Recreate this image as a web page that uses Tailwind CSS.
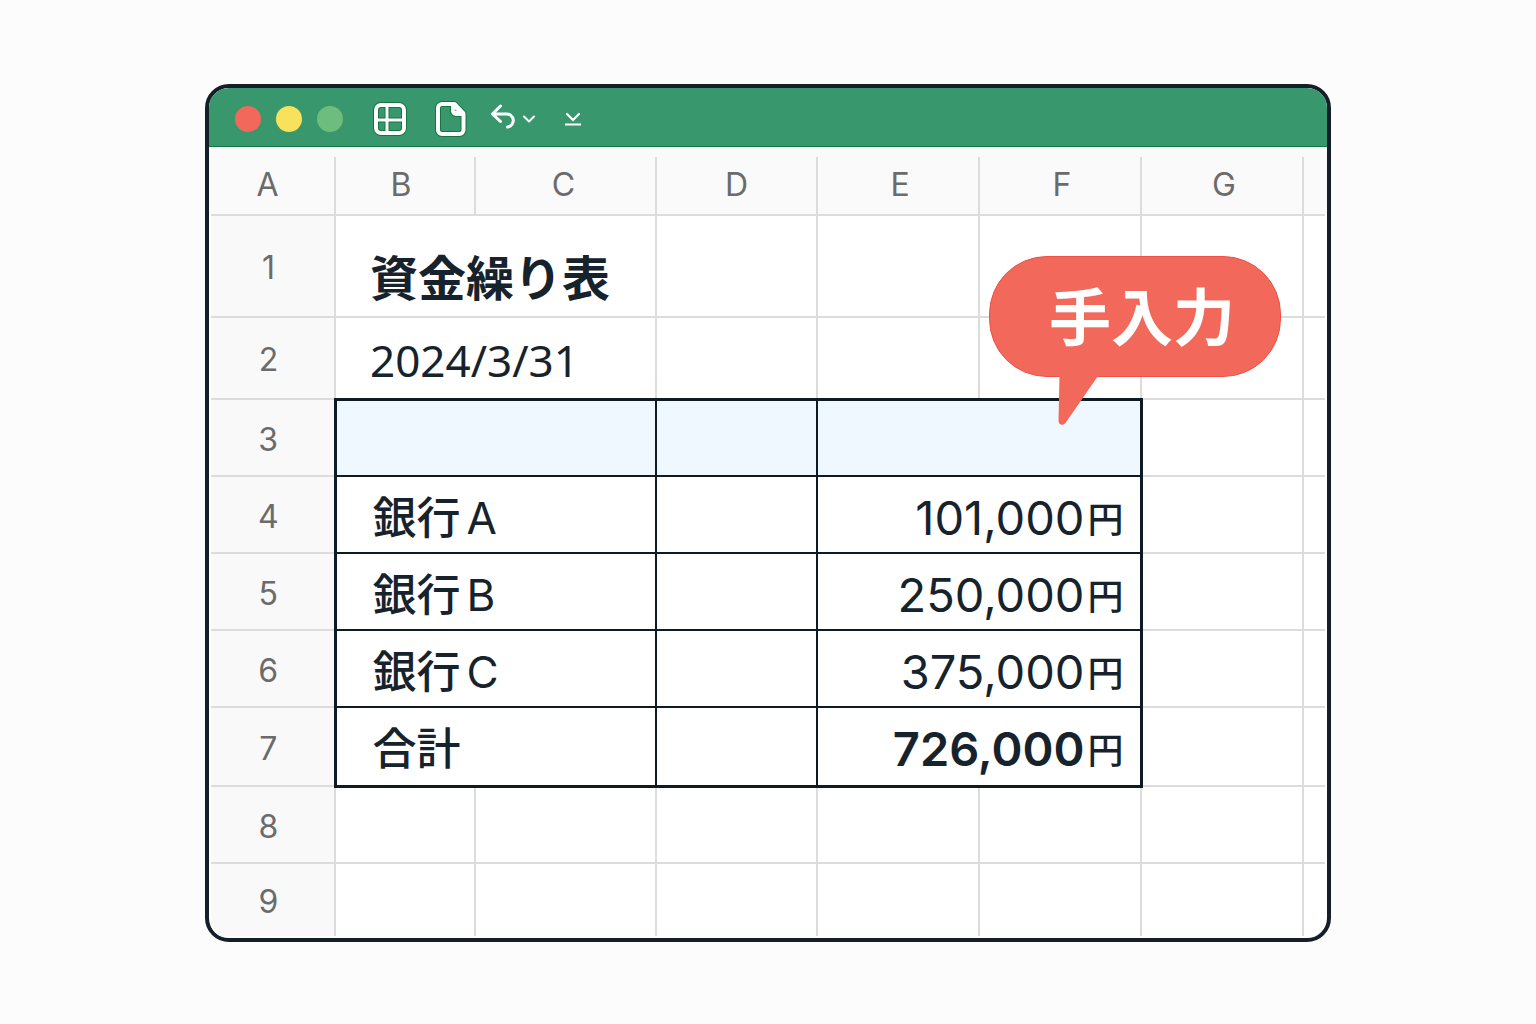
<!DOCTYPE html>
<html lang="ja">
<head>
    <meta charset="UTF-8">
    <meta name="viewport" content="width=device-width, initial-scale=1.0">
    <title>資金繰り表</title>
    <script src="https://cdn.jsdelivr.net/npm/@tailwindcss/browser@4"></script>
</head>
<body class="bg-[#fcfcfc] min-h-screen pt-[2px] flex items-center justify-center font-['Inter','Noto_Sans_CJK_JP',sans-serif] text-[#17232c]">
    <main class="relative w-full max-w-[1126px] border-4 border-[#141f29] rounded-3xl bg-white">
        <!-- Title bar -->
        <header class="h-[59px] flex items-center pt-[3px] pl-[26px] bg-[#39976e] border-b border-[#0f7a43] rounded-t-[20px]">
            <div class="flex gap-[15px]">
                <span class="size-[26px] rounded-full bg-[#f2695c]"></span>
                <span class="size-[26px] rounded-full bg-[#f8e25c]"></span>
                <span class="size-[26px] rounded-full bg-[#6cbd7e]"></span>
            </div>
            <button type="button" aria-label="表" class="ml-[30px]">
                <svg class="block" width="34" height="34" viewBox="0 0 34 34" fill="none">
                    <rect x="3" y="3" width="28" height="28" rx="5" stroke="#13753f" stroke-width="6"/>
                    <path d="M14 4v26M4 18h26" stroke="#13753f" stroke-width="5"/>
                    <rect x="3" y="3" width="28" height="28" rx="5" stroke="#fff" stroke-width="4"/>
                    <path d="M14 4v26M4 18h26" stroke="#fff" stroke-width="3"/>
                </svg>
            </button>
            <button type="button" aria-label="新規" class="ml-7">
                <svg class="block" width="32" height="36" viewBox="0 0 32 36" fill="none" stroke-linejoin="round">
                    <path d="M7 3h12.500l9 9.500v16.500a4 4 0 0 1-4 4H7a4 4 0 0 1-4-4V7a4 4 0 0 1 4-4z" stroke="#13753f" stroke-width="6"/>
                    <path d="M7 3h12.500l9 9.500v16.500a4 4 0 0 1-4 4H7a4 4 0 0 1-4-4V7a4 4 0 0 1 4-4z" stroke="#fff" stroke-width="4"/>
                    <path d="M17 4v6a4 4 0 0 0 4 4h7l-8-9z" fill="#fff" stroke="#fff" stroke-width="2"/>
                    <path d="M15.500 5v5.500a5 5 0 0 0 5 5H26" stroke="#13753f"/>
                    <path d="M19.500 8l2.500 2h-2z" fill="#5fa987"/>
                </svg>
            </button>
            <button type="button" aria-label="元に戻す" class="ml-[23px] mb-[3px]">
                <svg class="block" width="26" height="28" viewBox="0 0 26 28" fill="none" stroke="#fff" stroke-width="3" stroke-linecap="round" stroke-linejoin="round">
                    <path d="M10.500 3 2.500 11 10.500 18.500M3 11h13a6.500 6.500 0 0 1 1.500 13"/>
                </svg>
            </button>
            <button type="button" aria-label="履歴" class="ml-[7px]">
                <svg class="block" width="12" height="8" viewBox="0 0 12 8" fill="none" stroke="#fff" stroke-width="2" stroke-linecap="round" stroke-linejoin="round">
                    <path d="M1 1.500l5 5 5-5"/>
                </svg>
            </button>
            <button type="button" aria-label="その他" class="ml-[30px]">
                <svg class="block" width="16" height="14" viewBox="0 0 16 14" fill="none" stroke="#fff" stroke-width="2">
                    <path d="M2 2l6 6 6-6" stroke-width="2.200" stroke-linecap="round"/>
                    <path d="M0 12.500h16"/>
                </svg>
            </button>
        </header>

        <!-- Sheet -->
        <div class="pt-[10px] pb-[2px] px-[2px] rounded-b-[20px] overflow-hidden bg-[linear-gradient(#fafafa,#fafafa)] bg-[length:100%_68px] bg-no-repeat">
            <table class="w-full table-fixed border-collapse">
                <colgroup>
                    <col class="w-[124px]">
                    <col class="w-[140px]">
                    <col class="w-[181px]">
                    <col class="w-[161px]">
                    <col class="w-[162px]">
                    <col class="w-[162px]">
                    <col class="w-[162px]">
                    <col>
                </colgroup>
                <thead class="text-[32px] leading-10 text-[#6b6b6b]">
                    <tr class="h-[58px] bg-[#fafafa] *:border-b-2 *:border-[#dcdcdc] *:font-normal *:p-0 *:pb-[2px]">
                        <th scope="col" class="border-r-2"><span class="mr-[10px]">A</span></th>
                        <th scope="col" class="border-r-2"><span class="mr-2">B</span></th>
                        <th scope="col" class="border-r-2"><span class="mr-1">C</span></th>
                        <th scope="col" class="border-r-2">D</th>
                        <th scope="col" class="border-r-2"><span class="ml-1">E</span></th>
                        <th scope="col" class="border-r-2"><span class="ml-1">F</span></th>
                        <th scope="col" class="border-r-2"><span class="ml-1">G</span></th>
                        <td></td>
                    </tr>
                </thead>
                <tbody class="[&_th]:bg-[#f9f9f9] [&_th]:text-[32px] [&_th]:leading-10 [&_th]:font-normal [&_th]:text-[#6b6b6b] [&_th]:p-0 [&_th]:pt-1 [&_th]:pr-2">
                    <tr class="h-[102px] *:border-b-2 *:border-r-2 *:border-[#dcdcdc]">
                        <th scope="row">1</th>
                        <td colspan="2" class="pl-[34px] pt-[26px] text-[48px] leading-[56px] font-bold whitespace-nowrap">資金繰り表</td>
                        <td></td>
                        <td></td>
                        <td></td>
                        <td></td>
                        <td class="border-r-0!"></td>
                    </tr>
                    <tr class="h-[82px] *:border-b-2 *:border-r-2 *:border-[#dcdcdc]">
                        <th scope="row">2</th>
                        <td colspan="2" class="pl-[34px] pt-1 font-['Noto_Sans',sans-serif] text-[44px] leading-[56px] whitespace-nowrap">2024/3/31</td>
                        <td></td>
                        <td></td>
                        <td></td>
                        <td></td>
                        <td class="border-r-0!"></td>
                    </tr>
                    <tr class="h-[77px] *:border-b-2 *:border-r-2 *:border-[#dcdcdc]">
                        <th scope="row">3</th>
                        <td colspan="2" class="bg-[#f0f8ff] border-[#0e1a24]! border-l-3 border-t-3"></td>
                        <td class="bg-[#f0f8ff] border-[#0e1a24]! border-t-3"></td>
                        <td colspan="2" class="bg-[#f0f8ff] border-[#0e1a24]! border-t-3 border-r-3!"></td>
                        <td></td>
                        <td class="border-r-0!"></td>
                    </tr>
                    <tr class="h-[77px] *:border-b-2 *:border-r-2 *:border-[#dcdcdc]">
                        <th scope="row">4</th>
                        <td colspan="2" class="border-[#0e1a24]! border-l-3 pl-9 pt-[6px] text-[44px] leading-[56px] font-medium">銀行<span class="ml-[6px] font-normal">A</span></td>
                        <td class="border-[#0e1a24]!"></td>
                        <td colspan="2" class="border-[#0e1a24]! border-r-3! pr-4 pt-[6px] text-right text-[47px] leading-[56px] whitespace-nowrap">101,000<span class="ml-[3px] align-[2px] text-[36px] leading-10 font-medium">円</span></td>
                        <td></td>
                        <td class="border-r-0!"></td>
                    </tr>
                    <tr class="h-[77px] *:border-b-2 *:border-r-2 *:border-[#dcdcdc]">
                        <th scope="row">5</th>
                        <td colspan="2" class="border-[#0e1a24]! border-l-3 pl-9 pt-[6px] text-[44px] leading-[56px] font-medium">銀行<span class="ml-[6px] font-normal">B</span></td>
                        <td class="border-[#0e1a24]!"></td>
                        <td colspan="2" class="border-[#0e1a24]! border-r-3! pr-4 pt-[6px] text-right text-[47px] leading-[56px] whitespace-nowrap">250,000<span class="ml-[3px] align-[2px] text-[36px] leading-10 font-medium">円</span></td>
                        <td></td>
                        <td class="border-r-0!"></td>
                    </tr>
                    <tr class="h-[77px] *:border-b-2 *:border-r-2 *:border-[#dcdcdc]">
                        <th scope="row">6</th>
                        <td colspan="2" class="border-[#0e1a24]! border-l-3 pl-9 pt-[6px] text-[44px] leading-[56px] font-medium">銀行<span class="ml-[6px] font-normal">C</span></td>
                        <td class="border-[#0e1a24]!"></td>
                        <td colspan="2" class="border-[#0e1a24]! border-r-3! pr-4 pt-[6px] text-right text-[47px] leading-[56px] whitespace-nowrap">375,000<span class="ml-[3px] align-[2px] text-[36px] leading-10 font-medium">円</span></td>
                        <td></td>
                        <td class="border-r-0!"></td>
                    </tr>
                    <tr class="h-[79px] *:border-b-2 *:border-r-2 *:border-[#dcdcdc]">
                        <th scope="row">7</th>
                        <td colspan="2" class="border-[#0e1a24]! border-l-3 border-b-3! pl-9 pt-[6px] text-[44px] leading-[56px] font-medium">合計</td>
                        <td class="border-[#0e1a24]! border-b-3!"></td>
                        <td colspan="2" class="border-[#0e1a24]! border-r-3! border-b-3! pr-4 pt-[6px] text-right text-[47px] leading-[56px] font-semibold whitespace-nowrap">726,000<span class="ml-[3px] align-[2px] text-[36px] leading-10 font-medium">円</span></td>
                        <td></td>
                        <td class="border-r-0!"></td>
                    </tr>
                    <tr class="h-[77px] *:border-b-2 *:border-r-2 *:border-[#dcdcdc]">
                        <th scope="row">8</th>
                        <td></td>
                        <td></td>
                        <td></td>
                        <td></td>
                        <td></td>
                        <td></td>
                        <td class="border-r-0!"></td>
                    </tr>
                    <tr class="h-[73px] *:border-r-2 *:border-[#dcdcdc]">
                        <th scope="row">9</th>
                        <td></td>
                        <td></td>
                        <td></td>
                        <td></td>
                        <td></td>
                        <td></td>
                        <td class="border-r-0!"></td>
                    </tr>
                </tbody>
            </table>
        </div>

        <!-- Callout over the amount column -->
        <div class="absolute top-[168px] right-[46px] w-[292px] h-[121px] rounded-[58px] border border-[#ee5045] bg-[#f2695c] flex items-center justify-center pl-[14px] pt-1 text-white text-[62px] leading-[72px] font-bold">
            手入力
            <svg class="absolute left-[68px] top-[118px]" width="42" height="52" viewBox="0 0 42 52">
                <path d="M1.500 0 0.500 46c0 4 4.500 5 7 2L40 1V0z" fill="#f2695c"/>
            </svg>
        </div>
    </main>
</body>
</html>
